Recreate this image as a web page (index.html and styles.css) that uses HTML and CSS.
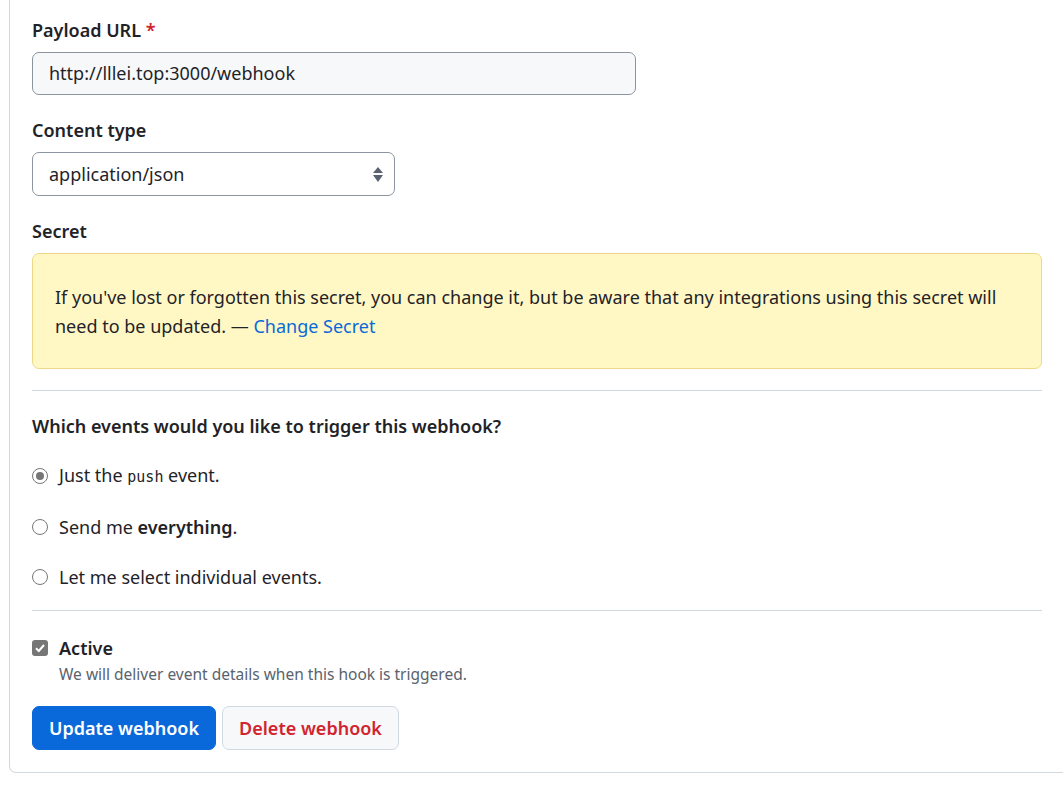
FILE: index.html
```html
<!DOCTYPE html>
<html>
<head>
<meta charset="utf-8">
<link rel="stylesheet" href="styles.css">
</head>
<body>
<div class="panel">
  <div class="group">
    <label class="label">Payload URL <span class="req">*</span></label>
    <div class="input">http://lllei.top:3000/webhook</div>
  </div>
  <div class="group">
    <label class="label">Content type</label>
    <div class="select">
      <span>application/json</span>
      <svg class="arrows" width="10" height="16" viewBox="0 0 10 16"><path d="M5 1 L10 7 H0 Z M5 16 L10 9 H0 Z" fill="#59636e"/></svg>
    </div>
  </div>
  <div class="group">
    <label class="label">Secret</label>
    <div class="flash">If you've lost or forgotten this secret, you can change it, but be aware that any integrations using this secret will need to be updated. —&nbsp;<a class="link">Change Secret</a></div>
  </div>
  <hr class="sep">
  <h3 class="question">Which events would you like to trigger this webhook?</h3>
  <div class="radios">
    <div class="radio-row"><span class="radio checked"></span><span>Just the <code>push</code> event.</span></div>
    <div class="radio-row"><span class="radio"></span><span>Send me <strong>everything</strong>.</span></div>
    <div class="radio-row"><span class="radio"></span><span>Let me select individual events.</span></div>
  </div>
  <hr class="sep sep2">
  <div class="check-row">
    <span class="checkbox"><svg width="12" height="12" viewBox="0 0 12 12"><path d="M2 6.2 L4.8 9 L10 3" stroke="#fff" stroke-width="2" fill="none"/></svg></span>
    <div>
      <div class="check-label">Active</div>
      <div class="note">We will deliver event details when this hook is triggered.</div>
    </div>
  </div>
  <div class="buttons">
    <button class="btn primary">Update webhook</button>
    <button class="btn danger">Delete webhook</button>
  </div>
</div>
</body>
</html>
```

FILE: styles.css
```css
html, body { margin: 0; padding: 0; background: #fff; }
body {
  font-family: "Noto Sans", "Open Sans", sans-serif;
  font-size: 18px;
  color: #1f2328;
  overflow: hidden;
}
.panel {
  margin-left: 9px;
  width: 1080px;
  border: 1px solid #d1d9e0;
  border-top: none;
  border-radius: 0 0 0 7px;
  padding: 16px 0 22px 22px;
  box-sizing: border-box;
}
.group { margin-bottom: 21px; width: 1010px; }
.label { display: block; font-weight: 600; line-height: 28px; margin-bottom: 8px; }
.req { color: #d1242f; }
.input {
  width: 604px; height: 43px; box-sizing: border-box;
  background: #f6f8fa; border: 1px solid #8c959f; border-radius: 7px;
  padding: 0 16px; line-height: 41px;
}
.select {
  width: 363px; height: 44px; box-sizing: border-box;
  border: 1px solid #8c959f; border-radius: 7px;
  padding: 0 11px 0 16px;
  display: flex; align-items: center; justify-content: space-between;
}
.arrows { display: block; }
.flash {
  background: #fff8c5; border: 1px solid #eed888; border-radius: 7px;
  padding: 29px 22px 27px; line-height: 29px; box-sizing: border-box;
  min-height: 114px;
}
.link { color: #0969da; text-decoration: none; }
.sep { border: 0; border-top: 1px solid #d1d9e0; margin: 22px 0 0; width: 1010px; }
.group + .sep { margin-top: 1px; }
.question { font-size: 18px; font-weight: 600; margin: 23px 0 25px; line-height: 24px; }
.radios { display: flex; flex-direction: column; gap: 26px; }
.radio-row { display: flex; align-items: center; gap: 11px; line-height: 24px; }
.radio {
  width: 16px; height: 16px; box-sizing: border-box; border-radius: 50%;
  border: 1px solid #767676; background: #fff; position: relative; flex: none;
}
.radio.checked::after {
  content: ""; position: absolute; left: 3px; top: 3px; width: 8px; height: 8px;
  border-radius: 50%; background: #767676;
}
code { font-family: "DejaVu Sans Mono", monospace; font-size: 15px; }
strong { font-weight: 600; }
.sep2 { margin-top: 21px; }
.check-row { display: flex; gap: 11px; margin-top: 25px; }
.checkbox {
  width: 16px; height: 16px; border-radius: 3px; background: #767676;
  display: flex; align-items: center; justify-content: center; margin-top: 4px; flex: none;
}
.check-label { font-weight: 600; line-height: 24px; }
.note { font-size: 15.5px; color: #59636e; line-height: 26px; margin-top: 1px; }
.buttons { display: flex; gap: 6px; margin-top: 19px; }
.btn {
  font-family: inherit; font-size: 18px; font-weight: 600; height: 44px;
  border-radius: 7px; padding: 0 10px; cursor: pointer;
}
.primary { background: #0969da; color: #fff; border: 1px solid #0969da; width: 184px; }
.danger { background: #f6f8fa; color: #d1242f; border: 1px solid #d1d9e0; width: 177px; }
```
